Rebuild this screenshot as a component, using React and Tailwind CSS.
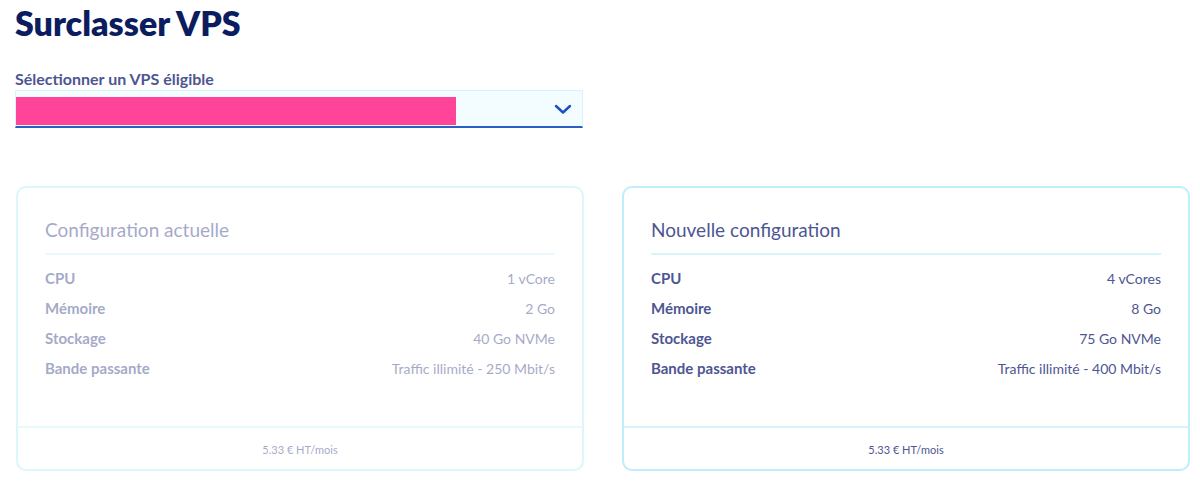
import React from "react";

const rows = (vals) => [
  ["CPU", vals[0]],
  ["Mémoire", vals[1]],
  ["Stockage", vals[2]],
  ["Bande passante", vals[3]],
];

function Card({ title, values, faded }) {
  return (
    <div
      className={
        "w-[568px] shrink-0 h-[285px] rounded-[10px] border-2 border-[#bdeefa] bg-white flex flex-col " +
        (faded ? "opacity-50" : "")
      }
    >
      <div className="flex-1 px-[27px] pt-[28px]">
        <div className="text-[19px] leading-[28px] text-[#4d5693] pb-[9px] border-b-2 border-[#d4f5fc]">
          {title}
        </div>
        <div className="pt-[8px] flex flex-col">
          {rows(values).map(([k, v]) => (
            <div key={k} className="flex justify-between items-center h-[30px]">
              <span className="font-bold text-[15px] text-[#4d5693]">{k}</span>
              <span className="text-[14px] text-[#4d5693]">{v}</span>
            </div>
          ))}
        </div>
      </div>
      <div className="h-[43px] border-t-2 border-[#d4f5fc] flex items-center justify-center text-[11px] text-[#4d5693] pt-[4px]">
        5.33 € HT/mois
      </div>
    </div>
  );
}

export default function App() {
  return (
    <div
      className="w-[1200px] h-[497px] bg-white px-[15px] overflow-hidden"
      style={{ fontFamily: "Lato, 'Open Sans', sans-serif" }}
    >
      <h1 className="text-[34px] leading-[46px] font-extrabold text-[#0b1d5f]">Surclasser VPS</h1>
      <div className="mt-[24px] text-[16px] leading-[18px] font-bold text-[#4d5693]">
        Sélectionner un VPS éligible
      </div>
      <div className="mt-[2px] w-[568px] h-[38px] bg-[#f3fdff] border border-[#d4f5fc] border-b-2 border-b-[#2c5fc2] flex items-center justify-between">
        <div className="w-[440px] h-[28px] bg-[#ff4499] mt-[6px] self-start"></div>
        <svg width="18" height="12" viewBox="0 0 18 12" className="mr-[10px]">
          <path d="M2 3 L9 9.5 L16 3" fill="none" stroke="#1a4fc4" strokeWidth="2.4" strokeLinecap="round" strokeLinejoin="round" />
        </svg>
      </div>
      <div className="mt-[58px] ml-[1px] flex gap-[38px]">
        <Card
          faded
          title="Configuration actuelle"
          values={["1 vCore", "2 Go", "40 Go NVMe", "Traffic illimité - 250 Mbit/s"]}
        />
        <Card
          title="Nouvelle configuration"
          values={["4 vCores", "8 Go", "75 Go NVMe", "Traffic illimité - 400 Mbit/s"]}
        />
      </div>
    </div>
  );
}
